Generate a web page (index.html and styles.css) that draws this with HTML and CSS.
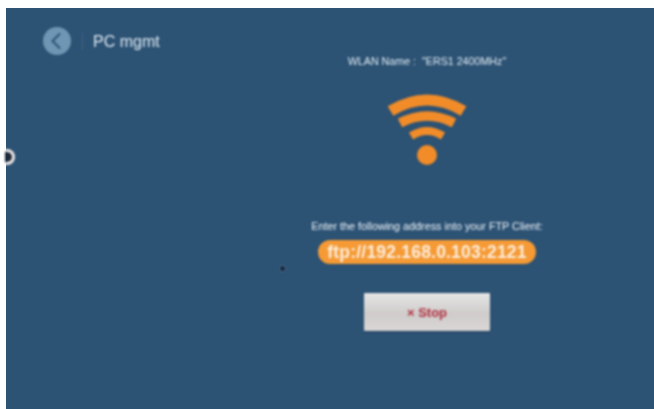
FILE: index.html
```html
<!DOCTYPE html>
<html lang="en">
<head>
<meta charset="utf-8">
<title>PC mgmt</title>
<link rel="stylesheet" href="styles.css">
</head>
<body>
<main class="screen">
  <header class="header">
    <button class="back" aria-label="Back">
      <svg viewBox="0 0 28 28" width="28" height="28"><path d="M17 6.5 L9.5 14 L17 21.5" fill="none" stroke="#2c5274" stroke-width="2"/></svg>
    </button>
    <span class="divider"></span>
    <h1 class="title">PC mgmt</h1>
  </header>
  <section class="content">
    <p class="wlan">WLAN Name :&nbsp; "ERS1 2400MHz"</p>
    <svg class="wifi" viewBox="0 0 80 78" width="80" height="78">
      <g fill="none" stroke="#f28c28" stroke-linecap="butt">
        <path d="M3.5 22 Q40 0 76.5 22" stroke-width="11"/>
        <path d="M13 34 Q40 20 67 34" stroke-width="9.5"/>
        <path d="M24 47 Q40 37 56 47" stroke-width="8"/>
      </g>
      <circle cx="40" cy="66" r="10" fill="#f28c28"/>
    </svg>
    <p class="hint">Enter the following address into your FTP Client:</p>
    <div class="address">ftp://192.168.0.103:2121</div>
    <button class="stop"><span class="stop-x">×</span> Stop</button>
  </section>
  <span class="edge-mark"></span>
  <span class="speck"></span>
</main>
</body>
</html>
```
FILE: styles.css
```css
* { box-sizing: border-box; }
html, body { margin: 0; height: 100%; background: #fdfefe; overflow: hidden; }
body { padding: 8px 0 0 6px; font-family: "Liberation Sans", Arial, sans-serif; }
.screen {
  position: relative;
  height: 401px;
  background: #2c5274;
  display: grid;
  grid-template-columns: 194px 1fr;
}
.header, .content, .edge-mark, .speck { filter: blur(0.8px); }
.header { display: flex; align-items: flex-start; padding: 19px 0 0 37px; }
.back {
  width: 28px; height: 28px; padding: 0; border: 0; border-radius: 50%;
  background: #6f97b3; display: flex;
}
.divider { width: 1px; height: 18px; margin: 5px 10px 0 11px; background: #3f6482; }
.title { margin: 5px 0 0; font-size: 16px; line-height: 20px; font-weight: 400; color: #e0ebf3; white-space: nowrap; }
.content { display: flex; flex-direction: column; align-items: center; }
.wlan { margin: 47px 0 0; font-size: 10.7px; line-height: 12px; color: #e2ecf3; white-space: nowrap; }
.wifi { margin-top: 22px; }
.hint { margin: 53px 0 0; font-size: 10.8px; line-height: 12px; color: #f0f5f9; white-space: nowrap; }
.address {
  margin-top: 8px; width: 218px; height: 24px; border-radius: 12px;
  background: #f59a35; color: #fdeedd; font-size: 17.5px; font-weight: 700; line-height: 24px;
  text-align: center; white-space: nowrap; letter-spacing: 0.2px;
}
.stop {
  margin-top: 29px; width: 126px; height: 38px; border: 0; border-radius: 1px;
  background: linear-gradient(#e6e6e6, #cfcccb 55%, #d9d6d6);
  box-shadow: 0 1px 1px #1f3c58;
  color: #b0303f; font: 700 13px "Liberation Sans", Arial, sans-serif;
}
.stop-x { font-size: 13px; }
.edge-mark {
  position: absolute; left: -1px; top: 141px; width: 10px; height: 16px;
  border-radius: 0 8px 8px 0; background: #1e2a38; border: 3px solid #f2ecea; border-left: 0;
}
.speck { position: absolute; left: 274px; top: 258px; width: 5px; height: 5px; border-radius: 50%; background: #14263a; box-shadow: 0 0 2px #8fa7ba; }
```
